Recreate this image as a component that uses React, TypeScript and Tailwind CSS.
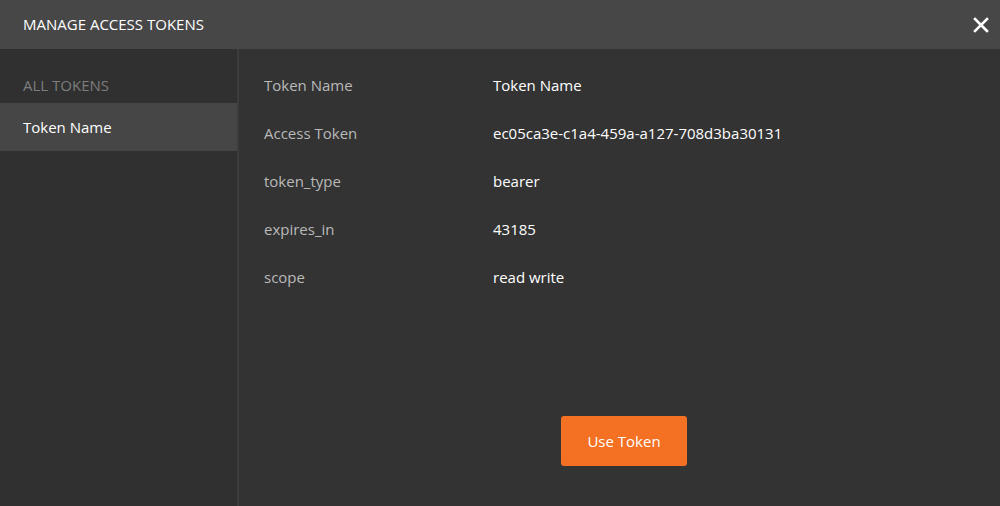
import React from "react";

const rows: [string, string][] = [
  ["Token Name", "Token Name"],
  ["Access Token", "ec05ca3e-c1a4-459a-a127-708d3ba30131"],
  ["token_type", "bearer"],
  ["expires_in", "43185"],
  ["scope", "read write"],
];

export default function App() {
  return (
    <div
      className="w-[1000px] h-[506px] flex flex-col bg-[#333333] overflow-hidden"
      style={{ fontFamily: '"Open Sans", "Noto Sans", sans-serif' }}
    >
      <div className="h-[49px] shrink-0 bg-[#474747] flex items-center justify-between pl-[23px] pr-[10px]">
        <span className="text-[15px] text-white">MANAGE ACCESS TOKENS</span>
        <svg width="16" height="16" viewBox="0 0 16 16" className="mr-[1px]">
          <path d="M2 2 L14 14 M14 2 L2 14" stroke="#ffffff" strokeWidth="2.6" strokeLinecap="square" />
        </svg>
      </div>
      <div className="flex flex-1 min-h-0">
        <div className="w-[237px] shrink-0 bg-[#303030] flex flex-col">
          <div className="h-[54px] flex items-center pl-[23px] pt-[18px]">
            <span className="text-[15px] text-[#7d7d7d]">ALL TOKENS</span>
          </div>
          <div className="h-[48px] bg-[#464646] flex items-center pl-[23px]">
            <span className="text-[15px] text-white">Token Name</span>
          </div>
        </div>
        <div className="w-[2px] shrink-0 bg-[#3c3c3c]" />
        <div className="flex-1 flex flex-col pl-[25px] pt-[12px] pb-[40px]">
          <div className="flex flex-col">
            {rows.map(([k, v]) => (
              <div key={k} className="h-[48px] flex items-center">
                <span className="w-[229px] text-[15px] text-[#b9b9b9]">{k}</span>
                <span className="text-[15px] text-white">{v}</span>
              </div>
            ))}
          </div>
          <div className="flex-1" />
          <div className="flex pl-[297px]">
            <button className="w-[126px] h-[50px] rounded-[3px] bg-[#f47023] text-white text-[15px]">
              Use Token
            </button>
          </div>
        </div>
      </div>
    </div>
  );
}
